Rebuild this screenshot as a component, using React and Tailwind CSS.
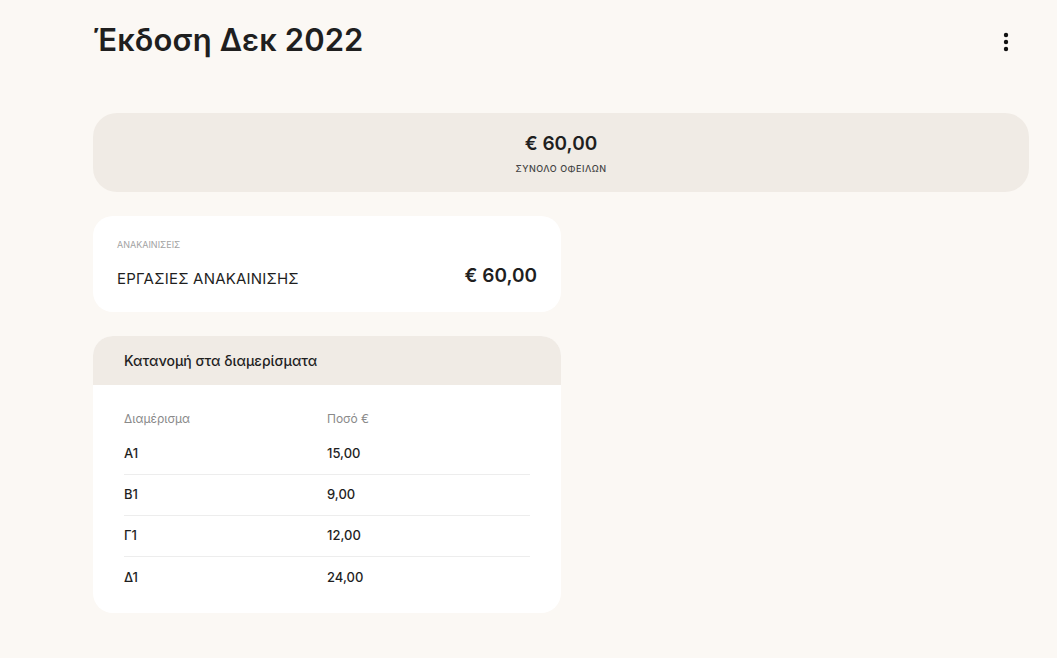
export default function App() {
  const rows = [
    ["Α1", "15,00"],
    ["Β1", "9,00"],
    ["Γ1", "12,00"],
    ["Δ1", "24,00"],
  ];
  return (
    <div
      className="min-h-[658px] w-full bg-[#fbf8f4] pl-[93px] pr-[28px] text-[#1f1f1f]"
      style={{ fontFamily: "Inter, 'Noto Sans', sans-serif" }}
    >
      <div className="flex h-[82px] items-center justify-between pr-[20px]">
        <h1 className="text-[31px] font-semibold tracking-[0.1px] leading-none pb-[4px]">Έκδοση Δεκ 2022</h1>
        <svg width="6" height="20" viewBox="0 0 6 20" className="mt-[2px]">
          <circle cx="3" cy="3" r="2.2" fill="#111" />
          <circle cx="3" cy="10" r="2.2" fill="#111" />
          <circle cx="3" cy="17" r="2.2" fill="#111" />
        </svg>
      </div>

      <div className="mt-[31px] flex h-[79px] flex-col items-center justify-center rounded-[24px] bg-[#f0ebe5]">
        <div className="text-[19px] font-semibold leading-none mt-[2px]">€ 60,00</div>
        <div className="mt-[11px] text-[9px] font-medium tracking-[0.5px] text-[#444] leading-none">ΣΥΝΟΛΟ ΟΦΕΙΛΩΝ</div>
      </div>

      <div className="mt-[24px] w-[468px] rounded-[20px] bg-white px-[24px] pt-[24px] pb-[26px]">
        <div className="text-[9px] text-[#a3a3a3] leading-none">ΑΝΑΚΑΙΝΙΣΕΙΣ</div>
        <div className="mt-[16px] flex items-center justify-between">
          <div className="text-[15px] tracking-[0.2px] leading-none pt-[6px]">ΕΡΓΑΣΙΕΣ ΑΝΑΚΑΙΝΙΣΗΣ</div>
          <div className="text-[19px] font-semibold leading-none">€ 60,00</div>
        </div>
      </div>

      <div className="mt-[24px] w-[468px] overflow-hidden rounded-[20px] bg-white">
        <div className="flex h-[49px] items-center bg-[#f0ebe5] px-[31px] text-[14px] font-medium leading-none">
          Κατανομή στα διαμερίσματα
        </div>
        <div className="px-[31px] pt-[28px] pb-[15px]">
          <div className="flex text-[12px] text-[#8a8a8a] leading-none pb-[9px]">
            <div className="w-[203px]">Διαμέρισμα</div>
            <div>Ποσό €</div>
          </div>
          {rows.map(([a, v], i) => (
            <div
              key={a}
              className={`flex h-[41px] items-center text-[13px] font-medium ${i < rows.length - 1 ? "border-b border-[#ededed]" : ""}`}
            >
              <div className="w-[203px]">{a}</div>
              <div>{v}</div>
            </div>
          ))}
        </div>
      </div>
    </div>
  );
}
